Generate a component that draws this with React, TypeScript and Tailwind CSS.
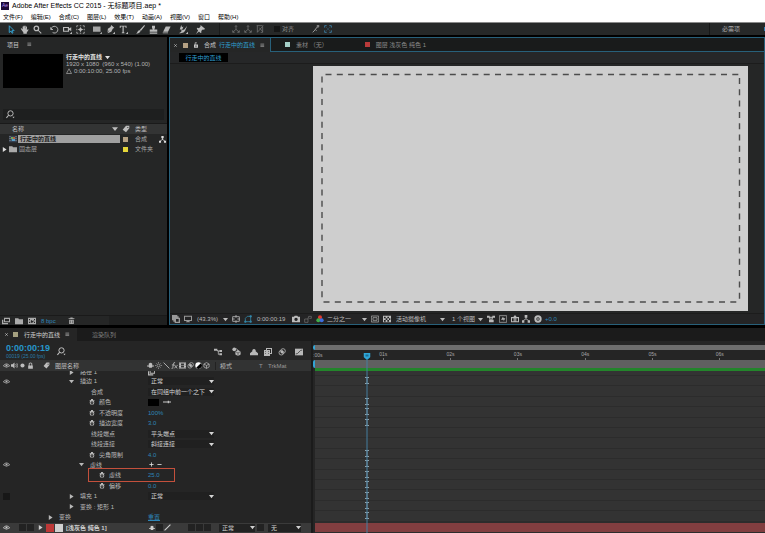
import { ReactNode } from "react";
import clsx from "clsx";

const ICONS: Record<string, ReactNode> = {
  select: <path d="M3 1v9l2.3-2 1.5 3 1.2-.6L6.600 7.500H9.500z" fill="none" stroke="currentColor" strokeWidth="1.200" />,
  hand: <path d="M1 5l1.200-.8L3.500 6V2h1.200v3V1H6v4l.3-4h1.200v4.500L8.200 2h1.200L9.200 6.500l1.500-1 .8.800L9 10v1.500H4.500V10z" />,
  zoom: (
    <>
      <circle cx="4.500" cy="4.500" r="3" fill="none" stroke="currentColor" strokeWidth="1.700" />
      <path d="M6.500 6l5 4.500-1 1L6 7z" />
    </>
  ),
  rotate: <path d="M1 3v3h3M1.500 5.500a4.500 4.500 0 1 1 2 4.500" fill="none" stroke="currentColor" strokeWidth="1.200" />,
  camera: <path d="M0 2.500h8v2L11 3v5L8 6.500V9H0zM1.500 4v3.500h5V4zM12 9v3H9z" fillRule="evenodd" />,
  panBehind: (
    <>
      <path d="M1 3V1h2M9 1h2v2M11 9v2H9M3 11H1V9M5 1h2M5 11h2M1 5v2M11 5v2" fill="none" stroke="currentColor" />
      <path d="M6 2.500L7.500 5 10 6 7.500 7 6 9.500 4.500 7 2 6l2.500-1z" />
    </>
  ),
  rect: <path d="M0 2h10v7H0zM12 9v3H9z" opacity=".85" />,
  pen: <path d="M7 0l4 3.500-2 1.500-2 4-5 2 2.500-4L4 7l-2 3 .5-5L6 2.500zM12 9v3H9z" />,
  type: <path d="M1 1h9v3H9L8.500 2H6.300v7.500l1 .5v1H3.700v-1l1-.5V2H2.500L2 4H1zM12 9v3H9z" />,
  brush: <path d="M11 0l1 1-5.500 7L5 6.500zM4.500 6.500l1.500 1.700C5 10.500 3 11 0 11.500c2-1 2-4.500 4.500-5z" />,
  stamp: <path d="M4 1h4v2.500L7 6h4v3H1V6h4L4 3.500zM1 10h10v1.500H1z" />,
  eraser: <path d="M5 2h6.500L8 9H1.500zM1 10h7v1H1z" />,
  roto: <path d="M3 0l1 3 2-1-2 5 3-1 4-5-3 7-2 2-4 1H0l3-2 .5-3H1zM12 9v3H9z" />,
  pin: <path d="M6 0l6 5-1.200 1.200L9 6 7 8l.3 2-1.300.8L4 8.500 0 12l2.800-4.800L1 5l.8-1.200 2.200.5L6 2z" />,
  axis: <path d="M6 1v5.500L1.500 10.500M6 6.500l4.500 4M4.500 2.500L6 .8l1.500 1.700M1 8v3h3M8 11h3V8" fill="none" stroke="currentColor" />,
  axisView: <path d="M1 1h9M2 1v10M2 11l9-10M5 4l5 6M10 3v8H7" fill="none" stroke="currentColor" />,
  snapLine: <path d="M1 11l4-4 2 1.500M4.500 7L8 3M7 1.500h4M9 0v4" fill="none" stroke="currentColor" strokeWidth="1.300" />,
  snapBox: <path d="M1 4V1h3M8 1h3v3M11 8v3H8M4 11H1V8M4 4l1 1M8 4L7 5M4 8l1-1M8 8L7 7" fill="none" stroke="currentColor" strokeWidth="1.300" />,
  menu: <path d="M1 2.500h9M1 5.500h9M1 8.500h9" stroke="currentColor" strokeWidth="1.200" />,
  close: <path d="M3 3l6 6M9 3L3 9" stroke="currentColor" strokeWidth="1.500" />,
  lock: <path d="M2 6h1V2.500Q6-.5 9 2.500V6h1v5.500H2zM4.500 6h3V3Q6 1.500 4.500 3z" fillRule="evenodd" />,
  unlock: <path d="M2 5h1.500V1.500Q6-1 8 1.500L7 3Q6 1.500 5 2.500V5h5v6.500H2zM5 7v2.500h2V7z" fillRule="evenodd" />,
  down: <path d="M0 2.500h12L6 10z" />,
  right: <path d="M2 0l9 6-9 6z" />,
  triangle: <path d="M6 1.500L11 11H1z" fill="none" stroke="currentColor" strokeWidth="1.300" />,
  search: (
    <>
      <circle cx="6" cy="4.500" r="3.500" fill="none" stroke="currentColor" strokeWidth="1.300" />
      <path d="M3.500 7L.5 10.500" stroke="currentColor" strokeWidth="1.500" />
      <path d="M8.500 9h3L10 11z" />
    </>
  ),
  tag: <path d="M6 1h5v4l-5 6-5-4zM8 3v1.500h1.500V3z" fillRule="evenodd" />,
  comp: (
    <>
      <path d="M0 1h12v10H0z" fill="#374151" />
      <path d="M1 2h1v1H1zM1 5h1v1H1zM1 8h1v1H1zM10 2h1v1h-1zM10 5h1v1h-1zM10 8h1v1h-1z" fill="#ddd" />
      <path d="M3 3h3v3H3z" fill="#6fa85c" />
      <path d="M6 3h3v3H6z" fill="#b5603f" />
      <path d="M4 6h5v3H4z" fill="#5aa0c8" />
    </>
  ),
  folder: <path d="M0 2h5l1 1.500h6V11H0z" />,
  flow: <path d="M4 0h4v4H6.700v1.500l3 2V8H12v3.500H8.500V8L6 6.500 3.500 8v3.500H0V8h2.300v-.5l3-2V4H4z" />,
  footage: <path d="M3 1h9v7H3zM0 4h2v5h7v2H0zM4.500 3v3.500h6V3z" fillRule="evenodd" />,
  newComp: <path d="M0 1h12v10H0zM1.500 3v2H3V3zm0 4v2H3V7zM9 3v2h1.500V3zm0 4v2h1.500V7zM4.500 4L4 9l4-1 .5-3-2 1z" fillRule="evenodd" />,
  trash: <path d="M1 2h3V1h4v1h3v1.500H1zM2 4.500h8V12H2zM4 6v4.500h.7V6zm3.300 0v4.500H8V6z" fillRule="evenodd" />,
  layers: <path d="M0 0h8v2h2v2h2v8H4v-2H2V8H0zM6 6v4h4V6z" fillRule="evenodd" />,
  monitor: <path d="M0 1h12v8H8l1 2H3l1-2H0zM1.500 2.500v5h9v-5z" fillRule="evenodd" />,
  gridBox: <path d="M1 2.500h10v7H1zM6 0v4M6 8v4M0 6h4M8 6h4" fill="none" stroke="currentColor" strokeWidth="1.200" />,
  mask: <path d="M2 10V5l3-3h6M10 2v8H2M1 9h2v2H1zM9 1h2v2H9zM9 9h2v2H9z" fill="none" stroke="currentColor" />,
  snapshot: <path d="M0 2.500h3L4 1h4l1 1.500h3V11H0zM6 4a2.500 2.500 0 1 0 .1 0z" fillRule="evenodd" />,
  showSnap: <path d="M1 6h5v5H1zM6 6l1-4h4v3H8" fill="none" stroke="currentColor" />,
  rgb: (
    <>
      <circle cx="6" cy="3.500" r="3" fill="#e03a2f" />
      <circle cx="3.500" cy="8" r="3" fill="#3fae49" />
      <circle cx="8.500" cy="8" r="3" fill="#3d6fe0" />
    </>
  ),
  roi: <path d="M.5 1.500h11v9H.5zM3 4h6v4H3z" fill="none" stroke="currentColor" />,
  checker: <path d="M0 1h12v10H0zM1.500 2.500V5H4V2.500zM6.500 2.500V5H9V2.500zM4 5v2.500h2.500V5zm5 0v2.500h2V5zM1.500 7.500V10H4V7.500zm5 0V10H9V7.500z" fillRule="evenodd" />,
  goggles: <path d="M0 1h4v1.500h4V1h4v3H9l-1 3h2v4H3V7h1L3 4H0zM5 4l.5 3h1L7 4z" fillRule="evenodd" />,
  fast: (
    <>
      <path d="M.5 1h11v10H.5z" fill="none" stroke="currentColor" />
      <path d="M6 2.500l1 2.500h2.500L7 9.500V7H3z" />
    </>
  ),
  timeline: <path d="M0 3h3.500L6 0l2.500 3H12v8H0zM1.500 5v4.500H4V5zm4 0v4.500h1V5zM8 5v4.500h2.500V5z" fillRule="evenodd" />,
  aperture: (
    <>
      <circle cx="6" cy="6" r="4" fill="none" stroke="currentColor" strokeWidth="3" />
      <path d="M6 4.500v3M4.500 6h3" stroke="currentColor" />
    </>
  ),
  eye: (
    <>
      <path d="M.5 6.500Q6 0 11.500 6.500 6 11.500.5 6.500z" fill="none" stroke="currentColor" strokeWidth="1.300" />
      <circle cx="6" cy="6" r="1.800" />
    </>
  ),
  speaker: (
    <>
      <path d="M0 4h2.500L6 1v10L2.500 8H0z" />
      <path d="M8 3.500q2 2.500 0 5M10 2q3 4 0 8" fill="none" stroke="currentColor" strokeWidth="1.200" />
    </>
  ),
  dot: <circle cx="6" cy="6" r="3.500" />,
  shy: <path d="M3 6V3q3-3.500 6 0v3h3v1.500H9.500L8 10H4L2.500 7.500H0V6z" />,
  sun: (
    <>
      <circle cx="6" cy="6" r="2.500" fill="none" stroke="currentColor" />
      <path d="M6 0v2M6 10v2M0 6h2M10 6h2M2 2l1 1M9 9l1 1M10 2L9 3M3 9l-1 1" stroke="currentColor" />
    </>
  ),
  slash: <path d="M1 1l10 10" stroke="currentColor" strokeWidth="1.500" />,
  quality: <path d="M11 1L1 11" stroke="currentColor" strokeWidth="1.800" />,
  fx: <path d="M7 1Q4.500 0 4 4L3 10q-.5 2-2 1M1.500 5H6M6 5l4.500 6M11.500 5L5.500 11" fill="none" stroke="currentColor" strokeWidth="1.400" />,
  film: <path d="M0 1h12v10H0zM3.500 2.500v3h5v-3zm0 4v3h5v-3zM1 2.500V4h1V2.500zM1 5.500V7h1V5.500zM1 8.500V10h1V8.500zM10 2.500V4h1V2.500zM10 5.500V7h1V5.500zM10 8.500V10h1V8.500z" fillRule="evenodd" />,
  blur: (
    <>
      <circle cx="7.500" cy="4.500" r="3.500" fill="none" stroke="currentColor" strokeWidth="1.200" />
      <circle cx="5" cy="7" r="3.500" fill="none" stroke="currentColor" strokeWidth="1.200" />
      <circle cx="6" cy="6" r="2" />
    </>
  ),
  adjust: (
    <>
      <circle cx="6" cy="6" r="5.500" fill="#fff" />
      <path d="M10 2A5.500 5.500 0 0 1 2 10z" fill="#000" />
    </>
  ),
  cube: <path d="M6 1l4.500 2.500v5L6 11 1.500 8.500v-5zM1.500 3.500L6 6l4.500-2.500M6 6v5" fill="none" stroke="currentColor" strokeWidth="1.200" />,
  stopwatch: <path d="M4 0h4v1.500L9 3l1.500-1 .5 1-1 1.500Q11.500 8 9 11H3Q.5 8 2 4L1 2h2l1 1zM6 4.500a2.800 2.800 0 1 0 .1 0zM5.500 5.500h1V8h-1z" fillRule="evenodd" />,
  dropper: <path d="M0 6h12M8 4v4" stroke="currentColor" strokeWidth="1.600" />,
  flowchart: (
    <>
      <path d="M0 1h5v3H0zM8 3h4v3H8zM8 8h4v3H8z" />
      <path d="M4 3l2.500 1.500V9.500H8M5 4.500h3" fill="none" stroke="currentColor" strokeWidth="1.200" />
    </>
  ),
  draft: (
    <>
      <circle cx="3" cy="3" r="2.500" />
      <path d="M3 3q4-2 5 2" fill="none" stroke="currentColor" />
      <path d="M8 4l3.500 2v4L8 12l-3.500-2V6z" />
      <path d="M8 12V8L4.500 6M8 8l3.500-2" fill="none" stroke="#222" strokeWidth=".7" />
    </>
  ),
  shyBig: <path d="M3.500 5V3q2.500-3 5 0v2L12 8v3H0V8z" />,
  blend: <path d="M3 0h9v9H9v3H0V3h3zM4.500 1.500V3H9v4.500h1.500v-6zM2 5v1h1V5zm0 3v1h1V8zm4-3v1h1V5zm0 3v1h1V8z" fillRule="evenodd" />,
  graph: (
    <>
      <path d="M0 1h12v10H0z" />
      <path d="M1 9q3 0 5-3t5-3" fill="none" stroke="#222" />
    </>
  ),
  plus: <path d="M6 1v10M1 6h10" stroke="currentColor" strokeWidth="2" />,
  minus: <path d="M1 6h10" stroke="currentColor" strokeWidth="2" />,
};

function Icon({ name, className = "size-2" }: { name: string; className?: string }) {
  return (
    <svg viewBox="0 0 12 12" fill="currentColor" className={clsx("shrink-0", className)} aria-hidden="true">
      {ICONS[name]}
    </svg>
  );
}

function IconButton({ name, label, className, size }: { name: string; label: string; className?: string; size?: string }) {
  return (
    <button type="button" aria-label={label} className={clsx("flex shrink-0 items-center justify-center", className)}>
      <Icon name={name} className={size} />
    </button>
  );
}

function Dropdown({ label, value, className }: { label: string; value: string; className?: string }) {
  return (
    <span className={clsx("relative flex h-2 shrink-0 items-center", className)}>
      <select aria-label={label} className="h-2 w-full appearance-none overflow-hidden pr-1 leading-[8px] outline-none">
        <option>{value}</option>
      </select>
      <Icon name="down" className="pointer-events-none absolute right-0 size-[5px]" />
    </span>
  );
}

const MENUS = ["文件(F)", "编辑(E)", "合成(C)", "图层(L)", "效果(T)", "动画(A)", "视图(V)", "窗口", "帮助(H)"];

const TOOL_GROUPS = [
  ["select", "hand", "zoom"],
  ["rotate", "camera", "panBehind"],
  ["rect", "pen", "type"],
  ["brush", "stamp", "eraser"],
  ["roto"],
  ["pin"],
];

function Toolbar() {
  return (
    <div className="flex h-[13px] items-center border-t border-[#8a8a8a] bg-[#262828] text-[#bcbcbc]">
      <div className="flex gap-1 pl-[5px]">
        {TOOL_GROUPS.map((group) => (
          <div key={group[0]} className="flex">
            {group.map((tool) => (
              <IconButton
                key={tool}
                name={tool}
                label={tool}
                size="size-[9px]"
                className={clsx("w-[13px]", tool === "select" && "text-[#35a7d8]")}
              />
            ))}
          </div>
        ))}
      </div>
      <div className="ml-3 flex h-full items-center gap-1 border-l border-[#1a1b1b] pl-3 text-[#808080]">
        <IconButton name="axis" label="本地轴" />
        <IconButton name="axis" label="世界轴" />
        <IconButton name="axisView" label="视图轴" />
      </div>
      <label className="ml-[10px] flex items-center gap-0.5 text-[6px] text-[#909090]">
        <input type="checkbox" className="size-[6px] appearance-none bg-[#151616]" />
        对齐
      </label>
      <div className="ml-[18px] flex gap-1 text-[#aaa]">
        <IconButton name="snapLine" label="对齐边缘" />
        <IconButton name="snapBox" label="对齐特征" className="text-[#3d83ad]" />
      </div>
      <button type="button" className="ml-auto h-full border-l border-[#171818] pr-6 pl-3 text-[6px] text-[#aaa]">
        必需项
      </button>
      <span className="h-1 w-px bg-[#2f7fb5]" />
    </div>
  );
}

function ProjectPanel() {
  return (
    <section className="flex w-[167px] shrink-0 flex-col bg-[#252626]">
      <div className="flex h-[15px] items-center gap-2 pl-[7px] text-[6px] text-[#c4c4c4]">
        项目
        <Icon name="menu" className="size-[5px]" />
      </div>
      <div className="flex h-[57px] shrink-0 gap-[3px] pt-[2px] pl-[3px]">
        <div className="h-[34px] w-[60px] bg-black" />
        <div className="flex flex-col gap-px text-[6px] leading-[6px] text-[#b4b4b4]">
          <p className="flex items-center gap-[3px] font-bold text-[#e0e0e0]">
            行走中的直线
            <Icon name="down" className="size-[5px]" />
          </p>
          <p className="whitespace-pre">1920 x 1080  (960 x 540) (1.00)</p>
          <p className="flex items-center gap-0.5">
            <Icon name="triangle" className="size-[6px]" />
            0:00:10:00, 25.00 fps
          </p>
        </div>
      </div>
      <label className="mx-[3px] flex h-[11px] items-center bg-[#1e1f1f] pl-[3px] text-[#bbb]">
        <Icon name="search" className="size-[9px]" />
        <input aria-label="搜索项目" className="h-2 min-w-0 flex-1 text-[6px] outline-none" />
      </label>
      <div className="mt-[3px] flex min-h-0 flex-1 border-t border-[#1a1a1a]">
        <div className="flex-1">
          <table className="w-full table-fixed border-collapse text-[6px] leading-[8px] text-[#a8a8a8]">
            <colgroup>
              <col className="w-[120px]" />
              <col className="w-[13px]" />
              <col />
            </colgroup>
            <thead>
              <tr className="h-[10px] bg-[#333434] text-left text-[#bdbdbd]">
                <th className="p-0 pl-3 font-normal">
                  <span className="flex items-center justify-between pr-[2px]">
                    名称
                    <Icon name="down" className="size-[6px]" />
                  </span>
                </th>
                <th className="p-0 pl-[2px]">
                  <Icon name="tag" />
                </th>
                <th className="p-0 pl-[2px] font-normal">类型</th>
              </tr>
            </thead>
            <tbody>
              <tr className="h-[10px]">
                <td className="p-0">
                  <span className="flex items-center">
                    <Icon name="comp" className="ml-[9px] size-[8px]" />
                    <span className="ml-px flex-1 bg-[#a0a0a0] pl-[2px] font-bold text-[#222]">行走中的直线</span>
                  </span>
                </td>
                <td className="p-0 pl-[3px]">
                  <span className="block size-[5px] bg-[#b5a184]" />
                </td>
                <td className="p-0 pl-[2px]">
                  <span className="flex items-center justify-between pr-px">
                    合成
                    <Icon name="flow" className="size-[7px] text-[#ddd]" />
                  </span>
                </td>
              </tr>
              <tr className="h-[10px]">
                <td className="p-0">
                  <span className="flex items-center">
                    <Icon name="right" className="ml-[2px] size-[5px] text-[#ddd]" />
                    <Icon name="folder" className="ml-[2px] size-[8px] text-[#aaa]" />
                    <span className="pl-[2px]">固态层</span>
                  </span>
                </td>
                <td className="p-0 pl-[3px]">
                  <span className="block size-[5px] bg-[#e6d639]" />
                </td>
                <td className="p-0 pl-[2px]">文件夹</td>
              </tr>
            </tbody>
          </table>
        </div>
      </div>
      <div className="flex h-[10px] items-center gap-[5px] border-t border-[#1a1a1a] pl-[2px] text-[6px] text-[#aaa]">
        <IconButton name="footage" label="解释素材" />
        <IconButton name="folder" label="新建文件夹" />
        <IconButton name="newComp" label="新建合成" />
        <button type="button" className="text-[#2e86b8]">8 bpc</button>
        <IconButton name="trash" label="删除" size="size-[7px]" className="ml-[7px]" />
        <span className="ml-auto h-full w-[58px] bg-[#1f2020]" />
      </div>
    </section>
  );
}

const TOP_DASHES = "M12.5 8.500H427M10.500 236H426";
const SIDE_DASHES = "M9 10.500V236M426.500 12V236";

function CompositionPanel() {
  return (
    <section className="flex min-w-0 flex-1 flex-col border border-[#28607a] bg-[#252626] text-[6px]">
      <div className="flex h-[14px] shrink-0 bg-[#191b1b]">
        <div className="flex w-[101px] shrink-0 items-center border-r border-[#28607a] bg-[#252626] pl-[3px] text-[#c8c8c8]">
          <IconButton name="close" label="关闭" size="size-[5px]" />
          <span className="ml-[5px] size-[5px] bg-[#b5a184]" />
          <Icon name="unlock" className="ml-[5px] size-[6px]" />
          <span className="ml-[5px]">合成</span>
          <span className="ml-[3px] text-[#2f9fd0]">行走中的直线</span>
          <Icon name="menu" className="ml-[5px] size-[5px]" />
        </div>
        <div className="flex flex-1 items-center border-b border-[#28607a] pl-[14px] text-[#8a8a8a]">
          <span className="mr-[6px] size-[5px] bg-[#a5cfc8]" />
          素材 （无）
          <span className="mr-[6px] ml-[37px] size-[5px] bg-[#b93a3a]" />
          图层 浅灰色 纯色 1
        </div>
      </div>
      <div className="flex h-3 shrink-0 items-center border-b border-[#1c1c1c] bg-[#262728] pl-[9px]">
        <button type="button" className="h-[9px] w-[49px] bg-black text-[#2f9fd0]">行走中的直线</button>
      </div>
      <div className="flex min-h-0 flex-1 pt-[2px] pr-[16px] pb-[2px] pl-[143px]">
        <svg viewBox="0 0 435 245" preserveAspectRatio="none" className="h-full w-full bg-[#cecece]" role="img" aria-label="合成预览">
          <g fill="none" stroke="#4c4c4c" strokeWidth="1.400" strokeDasharray="6 5.300">
            <path d={TOP_DASHES} />
            <path d={SIDE_DASHES} />
          </g>
        </svg>
      </div>
      <div className="flex h-[11px] shrink-0 items-center border-t border-[#1c1c1c] bg-[#242425] pl-[2px] text-[#bbb]">
        <IconButton name="layers" label="始终预览" className="text-[#999]" />
        <IconButton name="monitor" label="主查看器" className="ml-1 text-[#999]" />
        <Dropdown label="放大率" value="(43.3%)" className="ml-[5px] w-[31px]" />
        <IconButton name="gridBox" label="网格" className="ml-1" />
        <IconButton name="mask" label="蒙版可见性" className="ml-1 text-[#3798c0]" />
        <span className="ml-[5px] w-[31px]">0:00:00:19</span>
        <IconButton name="snapshot" label="拍摄快照" className="ml-[4px]" />
        <IconButton name="showSnap" label="显示快照" className="ml-1 text-[#777]" />
        <IconButton name="rgb" label="通道" className="ml-1" />
        <Dropdown label="分辨率" value="二分之一" className="ml-[3px] w-[40px]" />
        <IconButton name="roi" label="目标区域" className="ml-[4px]" />
        <IconButton name="checker" label="透明网格" className="ml-1" />
        <Dropdown label="3D 视图" value="活动摄像机" className="ml-[5px] w-[49px]" />
        <Dropdown label="视图布局" value="1 个视图" className="ml-[7px] w-[31px]" />
        <IconButton name="goggles" label="像素长宽比" className="ml-1" />
        <IconButton name="fast" label="快速预览" className="ml-1" />
        <IconButton name="timeline" label="时间轴" className="ml-1" />
        <IconButton name="flow" label="流程图" className="ml-[3px]" />
        <IconButton name="aperture" label="重置曝光度" className="ml-1" />
        <button type="button" className="ml-[3px] text-[#2e86b8]">+0.0</button>
      </div>
    </section>
  );
}

interface PropertyRow {
  name: string;
  indent: string;
  icon?: "down" | "right" | "stopwatch";
  eye?: boolean;
  box?: boolean;
  key?: boolean;
  select?: string;
  value?: string;
  extra?: ReactNode;
}

const ROWS: PropertyRow[] = [
  { name: "描边 1", indent: "pl-[69px]", icon: "down", eye: true, key: true, select: "正常" },
  { name: "合成", indent: "pl-[91px]", select: "在同组中前一个之下" },
  {
    name: "颜色",
    indent: "pl-[89px]",
    icon: "stopwatch",
    key: true,
    extra: (
      <span className="flex items-center gap-1 text-[#ccc]">
        <button type="button" aria-label="描边颜色" className="h-[7px] w-[11px] bg-black" />
        <IconButton name="dropper" label="吸管" size="size-[8px]" />
      </span>
    ),
  },
  { name: "不透明度", indent: "pl-[89px]", icon: "stopwatch", key: true, value: "100%" },
  { name: "描边宽度", indent: "pl-[89px]", icon: "stopwatch", key: true, value: "3.0" },
  { name: "线段端点", indent: "pl-[91px]", select: "平头端点" },
  { name: "线段连接", indent: "pl-[91px]", select: "斜接连接" },
  { name: "尖角限制", indent: "pl-[89px]", icon: "stopwatch", key: true, value: "4.0" },
  {
    name: "虚线",
    indent: "pl-[79px]",
    icon: "down",
    eye: true,
    key: true,
    extra: (
      <span className="flex items-center gap-[3px] pl-px text-[#ddd]">
        <IconButton name="plus" label="添加虚线" size="size-[5px]" />
        <IconButton name="minus" label="移除虚线" size="size-[5px]" />
      </span>
    ),
  },
  { name: "虚线", indent: "pl-[99px]", icon: "stopwatch", key: true, value: "25.0" },
  { name: "偏移", indent: "pl-[99px]", icon: "stopwatch", key: true, value: "0.0" },
  { name: "填充 1", indent: "pl-[69px]", icon: "right", box: true, key: true, select: "正常" },
  { name: "变换 : 矩形 1", indent: "pl-[69px]", icon: "right", key: true },
  { name: "变换", indent: "pl-[48px]", icon: "right", key: true, extra: <button type="button" className="text-[#2e86b8] underline">重置</button> },
];

function LayerRow({ row }: { row: PropertyRow }) {
  const isStopwatch = row.icon === "stopwatch";

  return (
    <div className="relative flex min-h-0 flex-1 items-center">
      {row.eye && <Icon name="eye" className="absolute left-[3px] size-[7px]" />}
      {row.box && <span className="absolute left-[3px] size-[7px] bg-[#171717]" />}
      <div className={clsx("flex w-[148px] shrink-0 items-center", isStopwatch ? "gap-[4px]" : "gap-[6px]", row.indent)}>
        {row.icon && <Icon name={row.icon} className={isStopwatch ? "size-[6px]" : "size-[5px]"} />}
        {row.name}
      </div>
      {row.select && (
        <Dropdown label={row.name} value={row.select} className="w-[66px] bg-[#202020] pr-[2px] pl-[3px] text-[#d4d4d4]" />
      )}
      {row.value && <button type="button" className="text-[#2e86b8]">{row.value}</button>}
      {row.extra}
      {row.value === "25.0" && (
        <span className="pointer-events-none absolute left-[88px] h-[14px] w-[87px] border border-[#c4503c]" />
      )}
    </div>
  );
}

function LayerList() {
  return (
    <div className="flex w-[311px] shrink-0 flex-col bg-[#252525] text-[6px] leading-[8px] text-[#b8b8b8]">
      <div className="flex h-[19px] shrink-0 items-center pt-[2px] pl-[6px]">
        <div>
          <p className="text-[9px] leading-[9px] font-bold text-[#2795cb]">0:00:00:19</p>
          <p className="text-[5px] leading-[6px] text-[#2a7ba6]">00019 (25.00 fps)</p>
        </div>
        <label className="ml-[7px] flex items-center text-[#c4c4c4]">
          <Icon name="search" className="size-[9px]" />
          <input aria-label="搜索图层" className="h-2 w-[100px] text-[6px] outline-none" />
        </label>
        <div className="ml-auto flex items-center pr-[8px]">
          <IconButton name="flowchart" label="微型流程图" className="mr-[10px]" />
          <IconButton name="draft" label="草图 3D" size="size-[9px]" className="mr-[9px]" />
          <IconButton name="shyBig" label="隐藏层" className="mr-[6px]" />
          <IconButton name="blend" label="帧混合" className="mr-[6px]" />
          <IconButton name="blur" label="运动模糊" className="mr-[9px]" />
          <IconButton name="graph" label="图表编辑器" />
        </div>
      </div>
      <div className="flex h-[11px] shrink-0 items-center bg-[#323333] text-[#bdbdbd]">
        <div className="flex w-[43px] shrink-0 items-center gap-px pl-[3px]">
          <Icon name="eye" className="size-[7px]" />
          <Icon name="speaker" className="size-[7px]" />
          <Icon name="dot" className="size-[7px]" />
          <Icon name="lock" className="size-[7px]" />
        </div>
        <Icon name="tag" className="size-[7px]" />
        <span className="ml-[5px] w-[92px]">图层名称</span>
        <div className="flex gap-px">
          {["shy", "sun", "slash", "fx", "film", "blur", "adjust", "cube"].map((name) => (
            <Icon key={name} name={name} className="size-[7px]" />
          ))}
        </div>
        <span className="ml-[5px] h-2 border-l border-[#222] pl-1">模式</span>
        <span className="ml-auto w-[9px] text-[#999]">T</span>
        <span className="w-[43px] text-[#999]">TrkMat</span>
      </div>
      <div className="flex min-h-0 flex-1 flex-col">
        <div className="flex h-[5px] shrink-0 items-end overflow-hidden">
          <div className="flex w-[148px] shrink-0 items-center gap-[6px] pl-[69px]">
            <Icon name="right" className="size-[5px]" />
            路径 1
          </div>
          <Icon name="footage" className="size-[7px]" />
        </div>
        {ROWS.map((row, i) => (
          <LayerRow key={i} row={row} />
        ))}
        <div className="relative flex min-h-0 flex-1 items-center bg-[#3a3a3a] text-[#d0d0d0]">
          <Icon name="eye" className="ml-[3px] size-[7px]" />
          <span className="ml-[9px] size-[7px] bg-[#222]" />
          <span className="ml-px size-[7px] bg-[#222]" />
          <Icon name="right" className="ml-[4px] size-[5px]" />
          <span className="ml-[3px] size-[8px] bg-[#bd3837]" />
          <span className="ml-px size-[8px] bg-[#d0d0d0]" />
          <span className="ml-[3px] w-[83px] font-bold">[浅灰色 纯色 1]</span>
          <Icon name="shy" className="size-[6px]" />
          <span className="ml-px size-[7px] bg-[#222]" />
          <Icon name="quality" className="ml-px size-[7px]" />
          <span className="ml-[17px] size-[7px] bg-[#222]" />
          <span className="ml-px size-[7px] bg-[#222]" />
          <span className="ml-px size-[7px] bg-[#222]" />
          <Dropdown label="模式" value="正常" className="ml-[8px] w-[36px] bg-[#222] pr-[4px] pl-[3px]" />
          <span className="ml-[2px] size-[7px] bg-[#222]" />
          <Dropdown label="轨道遮罩" value="无" className="ml-[4px] w-[33px] bg-[#222] pr-[4px] pl-[3px]" />
        </div>
      </div>
    </div>
  );
}

const SECONDS = ["01s", "02s", "03s", "04s", "05s", "06s"];

function KeyMark() {
  return (
    <svg viewBox="0 0 5 7" className="absolute left-[11.500%] h-[7px] w-[5px] -translate-x-1/2" aria-hidden="true">
      <path d="M.5.500h4M.5 6.500h4M2.500 0v7" stroke="#90a4ae" fill="none" />
    </svg>
  );
}

function TimeTrack() {
  return (
    <div className="relative ml-[2px] flex min-w-0 flex-1 flex-col bg-[#252525]">
      <div className="mt-[4px] flex h-[5px] shrink-0">
        <span className="w-[2px] rounded-l-sm bg-[#33a4d4]" />
        <span className="flex-1 bg-[#6d6d6d]" />
      </div>
      <div className="relative h-[10px] shrink-0 overflow-hidden text-[5px] leading-[10px] text-[#a8a8a8]">
        <span className="absolute left-0">:00s</span>
        {SECONDS.map((label, i) => (
          <span
            key={label}
            className="absolute flex h-full -translate-x-1/2 flex-col items-center"
            style={{ left: `${((i + 1) * 67.3 + 3) / 4.52}%` }}
          >
            <span className="leading-[8px]">{label}</span>
            <span className="h-[2px] w-px bg-[#777]" />
          </span>
        ))}
      </div>
      <div className="flex h-[11px] shrink-0">
        <span className="h-[8px] w-[2px] rounded-l-sm bg-[#33a4d4]" />
        <span className="flex-1 border-b-[3px] border-[#23852b] bg-[#606060]" />
      </div>
      <div className="ml-[2px] flex min-h-0 flex-1 flex-col bg-[#333]">
        <div className="h-[5px] shrink-0 border-b border-[#2c2c2c]" />
        {ROWS.map((row, i) => (
          <div key={i} className="relative flex min-h-0 flex-1 items-center border-b border-[#2c2c2c]">
            {row.key && <KeyMark />}
          </div>
        ))}
        <div className="flex-1 border-y border-[#2c2c2c] bg-[#823e40]" />
      </div>
      <div className="pointer-events-none absolute top-[12px] bottom-0 left-[12%] flex w-[7px] -translate-x-1/2 flex-col items-center">
        <svg viewBox="0 0 7 7" className="size-[7px] shrink-0" aria-hidden="true">
          <path d="M0 0h7v4L3.500 7 0 4z" fill="#2fa6d8" />
          <path d="M2 1.500h3v2h-3z" fill="#1c6d92" />
        </svg>
        <span className="w-px flex-1 bg-[#447e9f]" />
      </div>
    </div>
  );
}

export default function App() {
  return (
    <div className="flex h-screen flex-col bg-black font-['Liberation_Sans','Noto_Sans_CJK_SC',sans-serif] leading-none">
      <header className="shrink-0 bg-white text-black">
        <h1 className="flex h-[11px] items-center gap-[3px] pl-px text-[7px]">
          <span className="flex size-[8px] items-center justify-center bg-[#1d0b38] text-[5px] text-[#b58cf0]">Ae</span>
          Adobe After Effects CC 2015 - 无标题项目.aep *
        </h1>
        <nav className="flex h-[11px] items-center gap-2 pl-[3px] text-[6px]">
          {MENUS.map((menu) => (
            <button key={menu} type="button">{menu}</button>
          ))}
        </nav>
        <Toolbar />
      </header>
      <main className="mt-[2px] flex min-h-0 flex-1 gap-[2px]">
        <ProjectPanel />
        <CompositionPanel />
      </main>
      <section className="mt-[3px] flex h-[205px] shrink-0 flex-col bg-[#1b1b1b]">
        <div className="flex h-[13px] shrink-0 items-center text-[6px]">
          <div className="flex h-full w-[77px] items-center bg-[#252525] pl-[4px] text-[#d0d0d0]">
            <IconButton name="close" label="关闭" size="size-[5px]" />
            <span className="mr-[6px] ml-[4px] size-[5px] bg-[#a5a080]" />
            行走中的直线
            <Icon name="menu" className="ml-[5px] size-[5px]" />
          </div>
          <span className="pl-[15px] text-[#808080]">渲染队列</span>
        </div>
        <div className="flex min-h-0 flex-1">
          <LayerList />
          <TimeTrack />
        </div>
      </section>
    </div>
  );
}
